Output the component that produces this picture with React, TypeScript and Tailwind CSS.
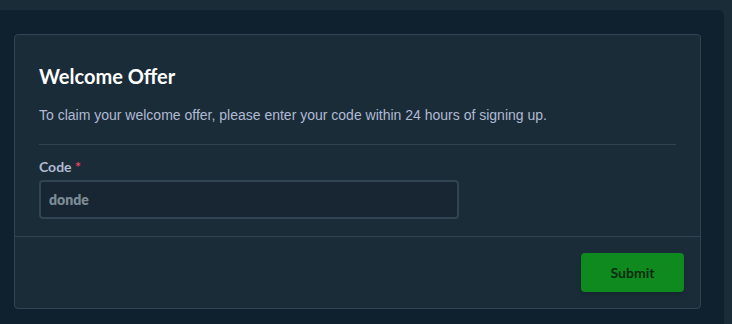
export default function App() {
  return (
    <div className="h-[324px] w-[732px] overflow-hidden bg-[#1a2c38] pt-[10px] pr-[8px]" style={{ fontFamily: "Lato, 'Liberation Sans', sans-serif" }}>
      <div className="h-full rounded-tr-md bg-[#0f212e] pl-[14px] pr-[23px] pt-[24px]">
        <div className="rounded-[4px] border border-[#2f4553] bg-[#1a2c38]">
          <div className="px-[24px] pt-[29px]">
            <h2 className="text-[20px] font-bold leading-[24px] text-white">Welcome Offer</h2>
            <p className="mt-[17px] pb-[19px] text-[14px] leading-[20px] text-[#b1bad3]" style={{ fontFamily: "'Liberation Sans', Arial, sans-serif" }}>
              To claim your welcome offer, please enter your code within 24 hours of signing up.
            </p>
            <div className="h-px bg-[#2f4553]" />
            <div className="pt-[9px] pb-[17px]">
              <label className="text-[14px] font-bold leading-[20px] text-[#b1bad3]">
                Code <span className="text-[#ed4163]">*</span>
              </label>
              <div className="mt-[2px] flex h-[39px] w-[420px] items-center rounded-[4px] border-2 border-[#2f4553] bg-[#172632] px-[8px]">
                <span className="text-[14px] font-extrabold text-[#7b8a95]">donde</span>
              </div>
            </div>
          </div>
          <div className="h-px bg-[#2f4553]" />
          <div className="flex justify-end px-[16px] pt-[16px] pb-[16px]">
            <button className="h-[39px] w-[103px] rounded-[4px] bg-[#0e8a1e] text-[14px] font-bold text-[#0a2a12] shadow-md">
              Submit
            </button>
          </div>
        </div>
      </div>
    </div>
  );
}
